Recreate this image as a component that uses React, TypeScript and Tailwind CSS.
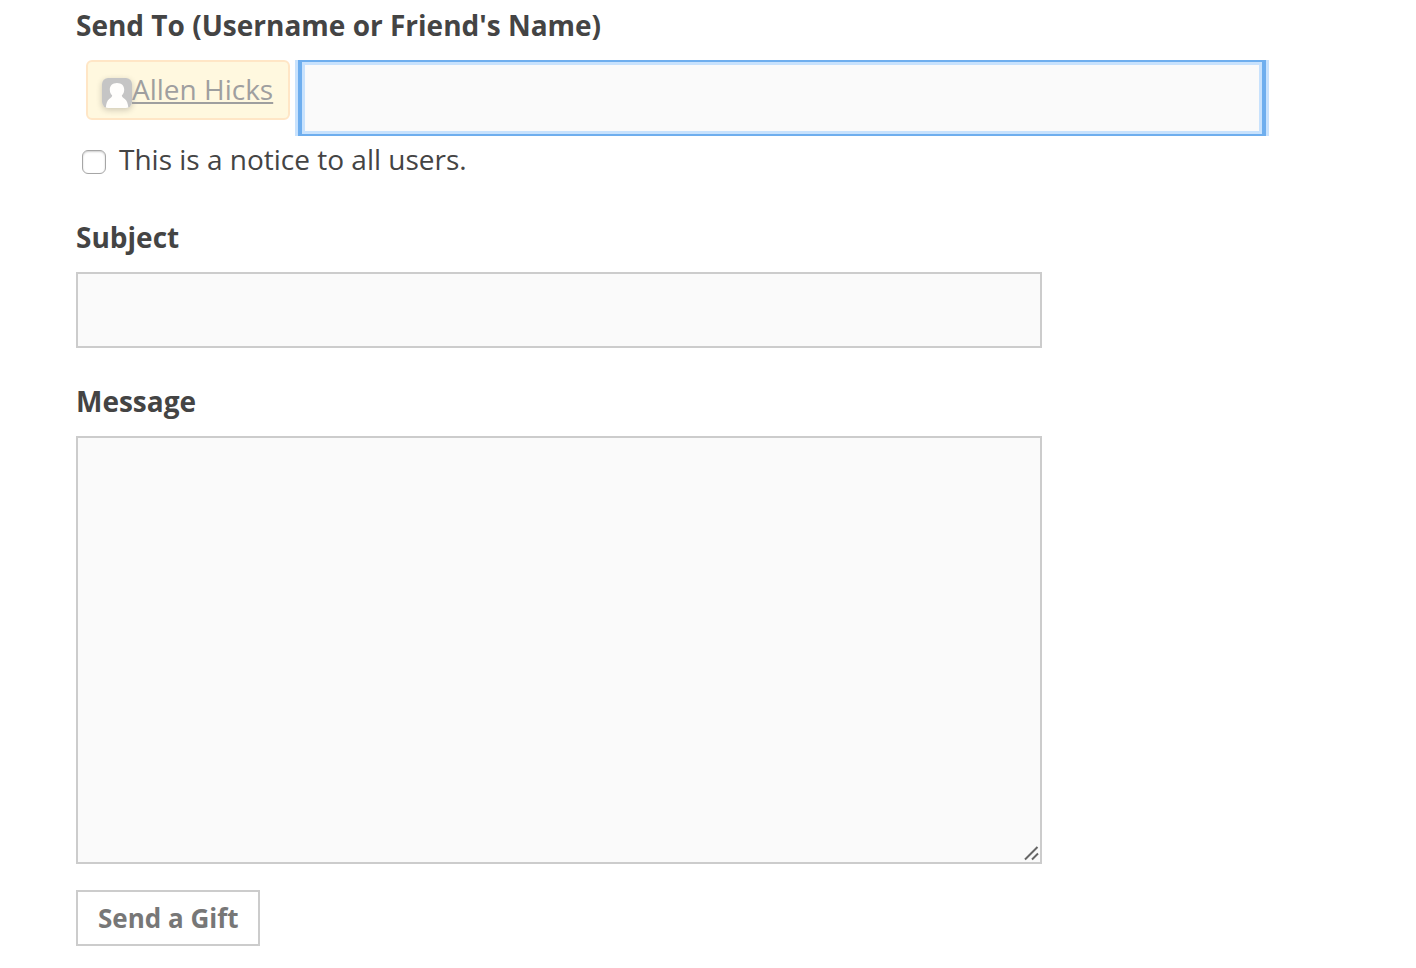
import React from "react";

function Avatar() {
  return (
    <svg
      viewBox="0 0 30 30"
      aria-hidden="true"
      className="size-[30px] shrink-0 rounded-md shadow-[0_2px_6px_rgba(0,0,0,0.2)]"
    >
      <rect width="30" height="30" fill="#c5c5c5" />
      <path
        d="M15 5c-4.500 0-7.200 2.800-7.200 6.600 0 2.600.8 4.500 2.400 6-.4 1.800-1.600 2.400-3 3.400C5 22.600 4.200 25.500 3.800 30h22.600c-.5-4.500-1.300-7.400-3.600-9-1.400-1-2.600-1.600-3-3.400 1.600-1.500 2.400-3.400 2.400-6C22.200 7.800 19.500 5 15 5z"
        fill="#fffefc"
      />
    </svg>
  );
}

function RecipientField() {
  return (
    <div className="flex items-start pl-2.5">
      <div className="flex h-[60px] shrink-0 items-center rounded-md border-2 border-[#ffe6c6] bg-[#fff8df] pr-[15px] pl-3.5">
        <a href="#allen-hicks" className="flex items-start text-[#9f9f9f]">
          <span className="pt-1.5">
            <Avatar />
          </span>
          <span className="underline decoration-2 underline-offset-2">Allen Hicks</span>
        </a>
      </div>
      <div className="ml-[5px] w-[974px] min-w-0 overflow-hidden px-[3px]">
        <input
          id="send-to"
          type="text"
          className="block h-[76px] w-full border-x-4 border-y-2 border-[#6eaeee] bg-[#fafafa] px-4 shadow-[0_0_0_3px_#c8e2fd,inset_0_0_0_3px_#c8e2fd] outline-none"
        />
      </div>
    </div>
  );
}

export default function App() {
  return (
    <form
      onSubmit={(e) => e.preventDefault()}
      className="min-h-screen bg-white px-[76px] pt-2 pb-5 font-['Open_Sans',sans-serif] text-[28px] leading-[34px] text-[#444444]"
    >
      <label htmlFor="send-to" className="mb-[18px] block font-bold">
        Send To (Username or Friend's Name)
      </label>
      <RecipientField />
      <div className="mt-1.5 flex items-start pl-1.5">
        <input
          id="notice"
          type="checkbox"
          className="mt-2 size-6 shrink-0 appearance-none rounded-md border border-[#a6a6a6] bg-white shadow-[inset_0_1px_2px_rgba(0,0,0,0.2)] checked:bg-[#6eaeee]"
        />
        <label htmlFor="notice" className="pl-[13px]">
          This is a notice to all users.
        </label>
      </div>

      <label htmlFor="subject" className="mt-11 mb-[18px] block font-bold">
        Subject
      </label>
      <input
        id="subject"
        type="text"
        className="block h-[76px] w-[966px] max-w-full border-2 border-[#cccccc] bg-[#fafafa] px-4 outline-none"
      />

      <label htmlFor="message" className="mt-9 mb-[18px] block font-bold">
        Message
      </label>
      <div className="relative w-[966px] max-w-full">
        <textarea
          id="message"
          className="block h-[428px] w-full resize-none border-2 border-[#cccccc] bg-[#fafafa] px-4 py-3 outline-none"
        />
        <svg
          viewBox="0 0 16 16"
          aria-hidden="true"
          className="pointer-events-none absolute right-0.5 bottom-0.5 size-4"
          stroke="#666666"
          strokeWidth="2"
        >
          <path d="M1 13.500 13.500 1M8 13.500l6-6" />
        </svg>
      </div>

      <button
        type="submit"
        className="mt-[26px] block h-14 border-2 border-[#cccccc] bg-white pr-[19px] pl-5 text-[26px] font-bold text-[#777777]"
      >
        Send a Gift
      </button>
    </form>
  );
}
